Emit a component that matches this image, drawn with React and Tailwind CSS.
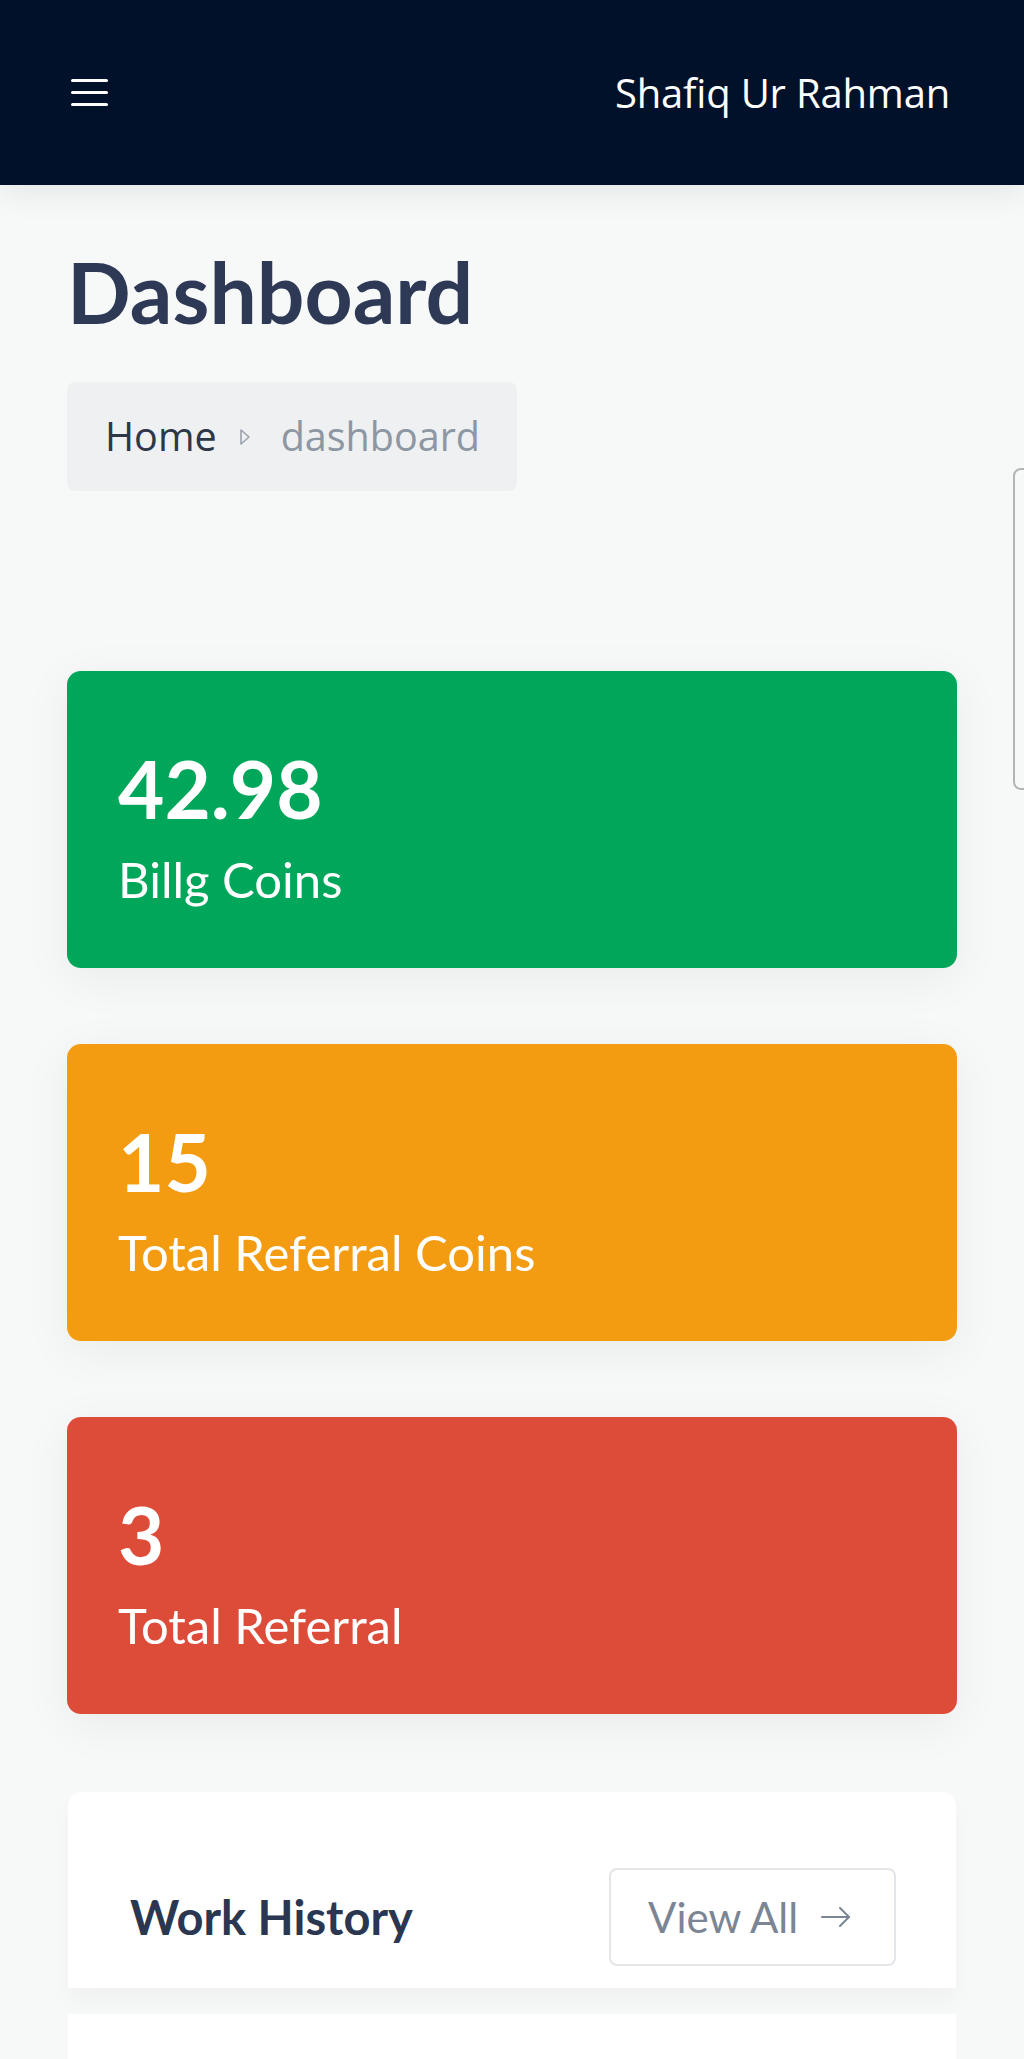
import React from 'react';

const stats = [
  { value: '42.98', label: 'Billg Coins', color: 'bg-[#00a65a]' },
  { value: '15', label: 'Total Referral Coins', color: 'bg-[#f39c12]' },
  { value: '3', label: 'Total Referral', color: 'bg-[#dd4b39]' },
];

function StatCard({ value, label, color }) {
  return (
    <div className={`${color} rounded-[14px] pl-[51px] pt-[69px] pb-[59px] shadow-[0_10px_50px_rgba(0,0,0,0.06)]`}>
      <div className="text-white font-bold text-[80px] leading-[96px] font-['Lato',sans-serif]">{value}</div>
      <div className="mt-[13px] text-white text-[49px] leading-[60px] font-['Lato',sans-serif]">{label}</div>
    </div>
  );
}

export default function App() {
  return (
    <div className="relative w-[1024px] h-[2059px] overflow-hidden bg-[#f7f8f8] font-['Lato',sans-serif]">
      <header className="relative z-10 h-[185px] bg-[#01112a] flex items-center justify-between pl-[71px] pr-[74px] shadow-[0_8px_30px_rgba(0,0,0,0.08)]">
        <button className="flex flex-col gap-[9px]">
          <span className="block w-[37px] h-[3px] bg-white rounded-sm" />
          <span className="block w-[37px] h-[3px] bg-white rounded-sm" />
          <span className="block w-[37px] h-[3px] bg-white rounded-sm" />
        </button>
        <span className="text-white text-[40px] font-medium tracking-[-0.2px] font-['Open_Sans',sans-serif]">Shafiq Ur Rahman</span>
      </header>

      <main className="px-[67px] pt-[56px]">
        <h1 className="text-[84px] leading-[101px] font-bold text-[#2e3a55]">Dashboard</h1>

        <nav className="mt-[40px] inline-flex items-center h-[109px] w-[450px] rounded-lg bg-[#eef0f1] pl-[38px] font-['Open_Sans',sans-serif] text-[39.5px]">
          <span className="text-[#2d3748]">Home</span>
          <svg width="12" height="18" viewBox="0 0 12 18" className="ml-[22px] mr-[30px]">
            <polygon points="2,2 10,9 2,16" fill="none" stroke="#9aa3ae" strokeWidth="1.6" strokeLinejoin="round" />
          </svg>
          <span className="text-[#8d96a3]">dashboard</span>
        </nav>

        <div className="mt-[180px] flex flex-col gap-[76px]">
          {stats.map((s) => (
            <StatCard key={s.label} {...s} />
          ))}
        </div>

        <section className="mt-[78px] mx-[1px]">
          <div className="bg-white rounded-t-[14px] h-[196px] flex items-start justify-between pl-[62px] pr-[60px] pt-[76px] shadow-[0_14px_24px_rgba(0,0,0,0.03)]">
            <h2 className="text-[47px] leading-[98px] font-bold text-[#2b3650]">Work History</h2>
            <button className="h-[98px] w-[287px] flex items-center justify-between pl-[37px] pr-[42px] rounded-lg border-2 border-[#e3e6e9] bg-white text-[#7b8594] text-[42px]">
              <span>View All</span>
              <svg width="32" height="24" viewBox="0 0 32 24" fill="none" stroke="#7b8594" strokeWidth="2" strokeLinecap="round" strokeLinejoin="round">
                <path d="M2 12h27" />
                <path d="M20 3l9 9-9 9" />
              </svg>
            </button>
          </div>
          <div className="mt-[26px] bg-white h-[200px]" />
        </section>
      </main>

      <div className="absolute left-[1013px] top-[468px] w-[30px] h-[322px] rounded-lg border-2 border-[#b4b4b4]" />
    </div>
  );
}
